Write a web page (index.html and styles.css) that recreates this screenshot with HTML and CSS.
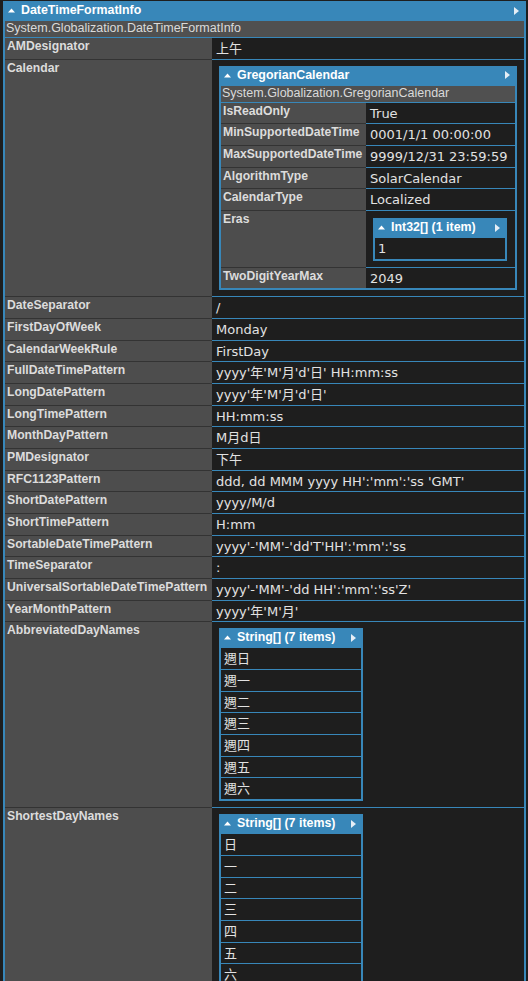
FILE: index.html
```html
<!DOCTYPE html>
<html>
<head>
<meta charset="utf-8">
<title>DateTimeFormatInfo</title>
<link rel="stylesheet" href="styles.css">
</head>
<body>
<table class="dump root">
  <tr><td class="hdr" colspan="2"><div class="hdr-in"><span class="title"><svg class="up" width="7" height="5" viewBox="0 0 7 5"><path d="M0 4.5L3.5 0.5L7 4.5Z"/></svg>DateTimeFormatInfo</span><svg class="rt" width="5" height="8" viewBox="0 0 5 8"><path d="M0 0L5 4L0 8Z"/></svg></div></td></tr>
  <tr><td class="tname" colspan="2">System.Globalization.DateTimeFormatInfo</td></tr>
  <tr class="first"><th class="k">AMDesignator</th><td class="v">上午</td></tr>
  <tr><th class="k">Calendar</th><td class="v">
    <table class="dump cal">
      <tr><td class="hdr" colspan="2"><div class="hdr-in"><span class="title"><svg class="up" width="7" height="5" viewBox="0 0 7 5"><path d="M0 4.5L3.5 0.5L7 4.5Z"/></svg>GregorianCalendar</span><svg class="rt" width="5" height="8" viewBox="0 0 5 8"><path d="M0 0L5 4L0 8Z"/></svg></div></td></tr>
      <tr><td class="tname" colspan="2">System.Globalization.GregorianCalendar</td></tr>
      <tr class="first"><th class="nk">IsReadOnly</th><td class="v nv">True</td></tr>
      <tr><th class="nk">MinSupportedDateTime</th><td class="v nv">0001/1/1 00:00:00</td></tr>
      <tr><th class="nk">MaxSupportedDateTime</th><td class="v nv">9999/12/31 23:59:59</td></tr>
      <tr><th class="nk">AlgorithmType</th><td class="v nv">SolarCalendar</td></tr>
      <tr><th class="nk">CalendarType</th><td class="v nv">Localized</td></tr>
      <tr><th class="nk">Eras</th><td class="v nv">
        <table class="dump coll ints">
          <tr><td class="hdr chdr"><div class="hdr-in"><span class="title"><svg class="up" width="7" height="5" viewBox="0 0 7 5"><path d="M0 4.5L3.5 0.5L7 4.5Z"/></svg>Int32[] (1 item)</span><svg class="rt" width="5" height="8" viewBox="0 0 5 8"><path d="M0 0L5 4L0 8Z"/></svg></div></td></tr>
          <tr><td class="item">1</td></tr>
        </table>
      </td></tr>
      <tr><th class="nk">TwoDigitYearMax</th><td class="v nv">2049</td></tr>
    </table>
  </td></tr>
  <tr><th class="k">DateSeparator</th><td class="v">/</td></tr>
  <tr><th class="k">FirstDayOfWeek</th><td class="v">Monday</td></tr>
  <tr><th class="k">CalendarWeekRule</th><td class="v">FirstDay</td></tr>
  <tr><th class="k">FullDateTimePattern</th><td class="v">yyyy'年'M'月'd'日' HH:mm:ss</td></tr>
  <tr><th class="k">LongDatePattern</th><td class="v">yyyy'年'M'月'd'日'</td></tr>
  <tr><th class="k">LongTimePattern</th><td class="v">HH:mm:ss</td></tr>
  <tr><th class="k">MonthDayPattern</th><td class="v">M月d日</td></tr>
  <tr><th class="k">PMDesignator</th><td class="v">下午</td></tr>
  <tr><th class="k">RFC1123Pattern</th><td class="v">ddd, dd MMM yyyy HH':'mm':'ss 'GMT'</td></tr>
  <tr><th class="k">ShortDatePattern</th><td class="v">yyyy/M/d</td></tr>
  <tr><th class="k">ShortTimePattern</th><td class="v">H:mm</td></tr>
  <tr><th class="k">SortableDateTimePattern</th><td class="v">yyyy'-'MM'-'dd'T'HH':'mm':'ss</td></tr>
  <tr><th class="k">TimeSeparator</th><td class="v">:</td></tr>
  <tr><th class="k">UniversalSortableDateTimePattern</th><td class="v">yyyy'-'MM'-'dd HH':'mm':'ss'Z'</td></tr>
  <tr><th class="k">YearMonthPattern</th><td class="v">yyyy'年'M'月'</td></tr>
  <tr><th class="k">AbbreviatedDayNames</th><td class="v">
    <table class="dump coll strs">
      <tr><td class="hdr chdr"><div class="hdr-in"><span class="title"><svg class="up" width="7" height="5" viewBox="0 0 7 5"><path d="M0 4.5L3.5 0.5L7 4.5Z"/></svg>String[] (7 items)</span><svg class="rt" width="5" height="8" viewBox="0 0 5 8"><path d="M0 0L5 4L0 8Z"/></svg></div></td></tr>
      <tr><td class="item">週日</td></tr>
      <tr><td class="item">週一</td></tr>
      <tr><td class="item">週二</td></tr>
      <tr><td class="item">週三</td></tr>
      <tr><td class="item">週四</td></tr>
      <tr><td class="item">週五</td></tr>
      <tr><td class="item">週六</td></tr>
    </table>
  </td></tr>
  <tr><th class="k">ShortestDayNames</th><td class="v">
    <table class="dump coll strs">
      <tr><td class="hdr chdr"><div class="hdr-in"><span class="title"><svg class="up" width="7" height="5" viewBox="0 0 7 5"><path d="M0 4.5L3.5 0.5L7 4.5Z"/></svg>String[] (7 items)</span><svg class="rt" width="5" height="8" viewBox="0 0 5 8"><path d="M0 0L5 4L0 8Z"/></svg></div></td></tr>
      <tr><td class="item">日</td></tr>
      <tr><td class="item">一</td></tr>
      <tr><td class="item">二</td></tr>
      <tr><td class="item">三</td></tr>
      <tr><td class="item">四</td></tr>
      <tr><td class="item">五</td></tr>
      <tr><td class="item">六</td></tr>
    </table>
  </td></tr>
</table>
</body>
</html>
```
FILE: styles.css
```css
* { box-sizing: border-box; }
html, body { margin: 0; padding: 0; background: #1e1e1e; }
body {
  padding: 1px 0 0 3px;
  font-family: "DejaVu Sans", "Noto Sans CJK TC", sans-serif;
  font-size: 13px;
  color: #e2e2e2;
}
table.dump {
  border-collapse: separate;
  border-spacing: 0;
  border: 2px solid #3887b9;
  background: #1e1e1e;
}
table.root { width: 523px; }
table.cal { width: 298px; margin: 3px 3px 4px 3px; }
table.ints { width: 134px; margin: 4px 3px 4px 3px; }
table.strs { width: 144px; margin: 3px 3px 4px 3px; }

td.hdr {
  background: #3887b9;
  color: #ffffff;
  font: bold 12.4px/15px "Liberation Sans", sans-serif;
  padding: 0 5px 3px 3px;
  white-space: nowrap;
}
td.chdr { padding-bottom: 2px; }
.hdr-in {
  display: flex;
  align-items: center;
  justify-content: space-between;
  gap: 10px;
}
.title { display: flex; align-items: center; gap: 6px; }
.up path { fill: #ffffff; }
.rt path { fill: #e4eef6; }

td.tname {
  background: #505050;
  color: #dadada;
  font: 12.5px/15px "Liberation Sans", sans-serif;
  padding: 0 1px 1px;
  white-space: nowrap;
}

th.k, th.nk {
  background: #4d4d4d;
  color: #dcdcdc;
  font: bold 12.2px/14px "Liberation Sans", sans-serif;
  text-align: left;
  vertical-align: top;
  padding: 1px 2px 0;
  border-top: 1px solid #333333;
  white-space: nowrap;
}
th.k { width: 207px; }
th.nk { width: 145px; }
tr.first > th { border-top-color: #3887b9; }

td.v {
  background: #1e1e1e;
  vertical-align: top;
  padding: 3px 4px 2px;
  line-height: 15.67px;
  border-top: 1px solid #3887b9;
  white-space: nowrap;
}
td.v { width: 312px; }
td.nv { width: 149px; }

td.item {
  background: #1e1e1e;
  padding: 3px 3px 2px;
  line-height: 15.67px;
  border-top: 1px solid #3887b9;
  white-space: nowrap;
}
```
